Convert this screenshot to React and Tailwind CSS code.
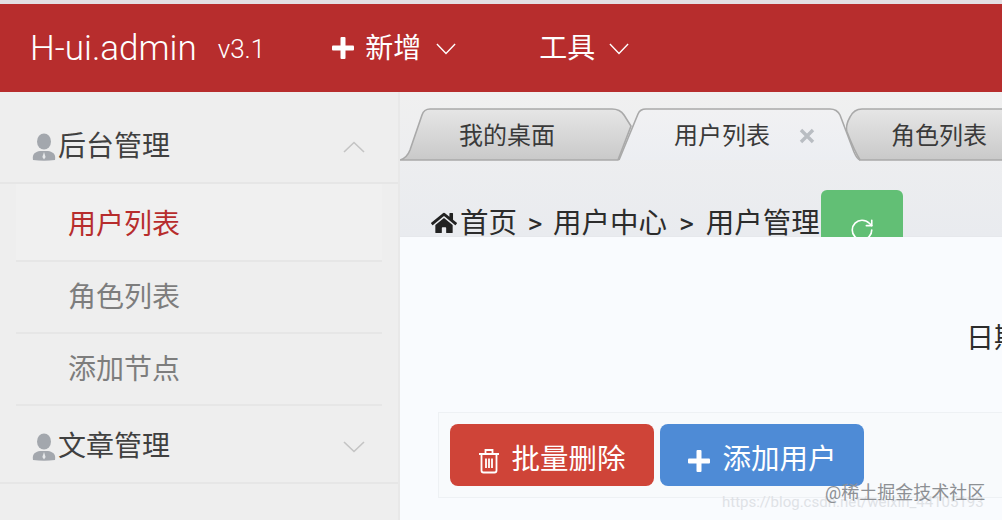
import React from "react";
import { FaHome } from "react-icons/fa";
import { RotateCw } from "lucide-react";

const Chevron = ({ up, className, width = 22 }) => (
  <svg width={width} height="12" viewBox="0 0 22 12" preserveAspectRatio="none" fill="none" stroke="currentColor" strokeWidth="1.6" className={className}>
    <polyline points={up ? "1,11 11,1.5 21,11" : "1,1 11,10.5 21,1"} />
  </svg>
);

const Plus = ({ size = 24 }) => (
  <svg width={size} height={size} viewBox="0 0 24 24" fill="currentColor">
    <rect x="9.5" y="1" width="5" height="22" rx="1" />
    <rect x="1" y="9.5" width="22" height="5" rx="1" />
  </svg>
);

const UserIcon = () => (
  <svg width="24" height="28" viewBox="0 0 24 28" className="shrink-0">
    <ellipse cx="12" cy="8.5" rx="7" ry="8" fill="#a3a7ad" />
    <path d="M1 27 C0 21 3 19 8 18 L16 18 C21 19 24 21 23 27 Q12 28.5 1 27 Z" fill="#a3a7ad" />
    <path d="M12 19 L13.6 24 L12 26.5 L10.4 24 Z" fill="#e6e8ea" />
  </svg>
);

const TrashIcon = () => (
  <svg width="22" height="26" viewBox="0 0 22 26" fill="none" stroke="currentColor" strokeWidth="1.8">
    <path d="M1 6 H21 M7.5 6 V2 H14.5 V6" />
    <path d="M3.5 6 V22.5 Q3.5 24.5 5.5 24.5 H16.5 Q18.5 24.5 18.5 22.5 V6" />
    <path d="M8 10.5 V20 M11 10.5 V20 M14 10.5 V20" />
  </svg>
);

// tab outlines are drawn, the label sits on top
const Tab = ({ label, width, d, active, closable, className, labelClass, id }) => (
  <div className={`relative h-[54px] shrink-0 ${className}`} style={{ width }}>
    <svg width={width} height="54" viewBox={`0 0 ${width} 54`} className="absolute inset-0">
      <defs>
        <linearGradient id={id} x1="0" y1="0" x2="0" y2="1">
          <stop offset="0" stopColor={active ? "#f1f1f3" : "#e6e6e6"} />
          <stop offset="1" stopColor={active ? "#eceef2" : "#c9c9c9"} />
        </linearGradient>
      </defs>
      <path d={d} fill={`url(#${id})`} stroke={active ? "none" : "#a9a9a9"} strokeWidth="1.6" />
      {active && (
        <path d={d.replace(/ Z$/, "")} fill="none" stroke="#a9a9a9" strokeWidth="1.6" />
      )}
    </svg>
    <div className={`absolute top-[8px] flex items-center whitespace-nowrap text-[24px] leading-[40px] text-[#3a3a3a] ${labelClass}`}>
      {label}
      {closable && (
        <svg width="16" height="16" viewBox="0 0 16 16" stroke="#b9bdc2" strokeWidth="3.4" className="ml-[29px]">
          <path d="M2 2 L14 14 M14 2 L2 14" />
        </svg>
      )}
    </div>
  </div>
);

const SubItem = ({ children, active }) => (
  <div className={`mx-[16px] flex items-center border-b-2 border-[#e6e6e6] pl-[52px] text-[28px] ${active ? "h-[78px] bg-[#f0f0f0] pt-[5px] text-[#b72d2d]" : "h-[72px] pt-[1px] text-[#7d7d7d]"}`}>
    {children}
  </div>
);

const MenuHead = ({ children, up, className }) => (
  <div className={`flex items-center justify-between border-b-2 border-[#e6e6e6] pl-[32px] pr-[33px] text-[28px] text-[#404040] ${className}`}>
    <div className="flex items-center gap-[2px]">
      <UserIcon />
      {children}
    </div>
    <Chevron up={up} className="text-[#c4c4c4]" />
  </div>
);

export default function App() {
  return (
    <div className="relative flex h-[520px] w-[1002px] flex-col overflow-hidden bg-[#f9fbfe] font-['Roboto','Noto_Sans_CJK_SC',sans-serif]">
      <div className="h-[4px] shrink-0 bg-[#e3dfe3]" />

      {/* Header */}
      <header className="flex h-[88px] shrink-0 items-center bg-[#b72d2d] pl-[30px] text-white">
        <span className="text-[35px] font-light leading-none">H-ui.admin</span>
        <span className="ml-[21px] mt-[2px] text-[26px] font-light leading-none">v3.1</span>
        <div className="ml-[66px] flex items-center">
          <Plus />
          <span className="ml-[10px] mt-[2px] text-[28px]">新增</span>
          <Chevron width={20} className="ml-[15px] mt-[2px]" />
        </div>
        <div className="ml-[83px] flex items-center">
          <span className="mt-[2px] text-[28px]">工具</span>
          <Chevron width={20} className="ml-[14px] mt-[2px]" />
        </div>
      </header>

      <div className="flex min-h-0 flex-1">
        {/* Sidebar */}
        <aside className="w-[400px] shrink-0 border-r-2 border-[#e8e8e8] bg-[#eeeeee]">
          <MenuHead up className="h-[92px] pt-[19px]">后台管理</MenuHead>
          <SubItem active>用户列表</SubItem>
          <SubItem>角色列表</SubItem>
          <SubItem>添加节点</SubItem>
          <MenuHead className="h-[78px] pt-[5px]">文章管理</MenuHead>
        </aside>

        {/* Main */}
        <main className="min-w-0 flex-1 overflow-hidden">
          <div className="h-[145px] border-b border-[#e6e8ec] bg-gradient-to-b from-[#f0f0f0] to-[#e9ebef]">
            <div className="flex pt-[16px]">
              <Tab
                id="tab-a"
                label="我的桌面"
                width={232}
                className="z-0"
                labelClass="left-[59px]"
                d="M0 52 Q7 50 10 42 L22 7 Q24 1 30 1 L212 1 Q220 1 224 7 L231 18 L218 52 Z"
              />
              <Tab
                id="tab-b"
                active
                closable
                label="用户列表"
                width={242}
                className="z-10 -ml-[14px]"
                labelClass="left-[56px]"
                d="M1 52 L20 6 Q22 1 28 1 L212 1 Q219 1 222 7 L236 44 Q239 51 242 52 Z"
              />
              <Tab
                id="tab-c"
                label="角色列表"
                width={170}
                className="z-0 -ml-[14px]"
                labelClass="left-[45px]"
                d="M14 52 Q8 42 1 24 Q-1 18 4 9 Q8 1 16 1 L170 1 L170 52 Z"
              />
            </div>
            <div className="mt-[-2px] flex h-[77px] items-end pl-[31px]">
              <FaHome className="mb-[1px] shrink-0 text-[#222]" size={26} />
              <div className="ml-[3px] flex h-[27px] items-center whitespace-nowrap text-[28.5px] leading-[27px] text-[#2c2c2c]">
                <span>首页</span>
                <span className="mx-[10.5px]">&gt;</span>
                <span>用户中心</span>
                <span className="mx-[12px]">&gt;</span>
                <span>用户管理</span>
              </div>
              <div className="ml-[1px] flex h-[47px] w-[82px] shrink-0 justify-center overflow-hidden rounded-t-md bg-[#62bf75] pt-[27px] text-white">
                <RotateCw size={26} strokeWidth={1.5} className="shrink-0" />
              </div>
            </div>
          </div>

          <div className="mt-[82px] whitespace-nowrap pl-[566px] text-[28px] leading-[40px] text-[#2c2c2c]">日期范围：</div>

          <div className="ml-[38px] mt-[53px] flex h-[86px] w-[600px] items-center gap-[6px] border border-[#eef1f4] bg-[#f8fafc] pl-[11px]">
            <button className="flex h-[62px] w-[204px] items-center justify-center gap-[11px] rounded-lg bg-[#cf4438] pt-[11px] text-[28.5px] text-white">
              <TrashIcon />
              批量删除
            </button>
            <button className="flex h-[62px] w-[204px] items-center justify-center gap-[11px] rounded-lg bg-[#4e8bd6] pt-[11px] text-[28.5px] text-white">
              <Plus />
              添加用户
            </button>
          </div>
        </main>
      </div>

      {/* Watermarks */}
      <div className="absolute left-[722px] top-[491px] whitespace-nowrap text-[15px] leading-[22px] text-[#dfe2e6]">https://blog.csdn.net/weixin_44105193</div>
      <div className="absolute left-[825px] top-[481px] whitespace-nowrap text-[18px] leading-[24px] text-[#8d9094]">@稀土掘金技术社区</div>
    </div>
  );
}
